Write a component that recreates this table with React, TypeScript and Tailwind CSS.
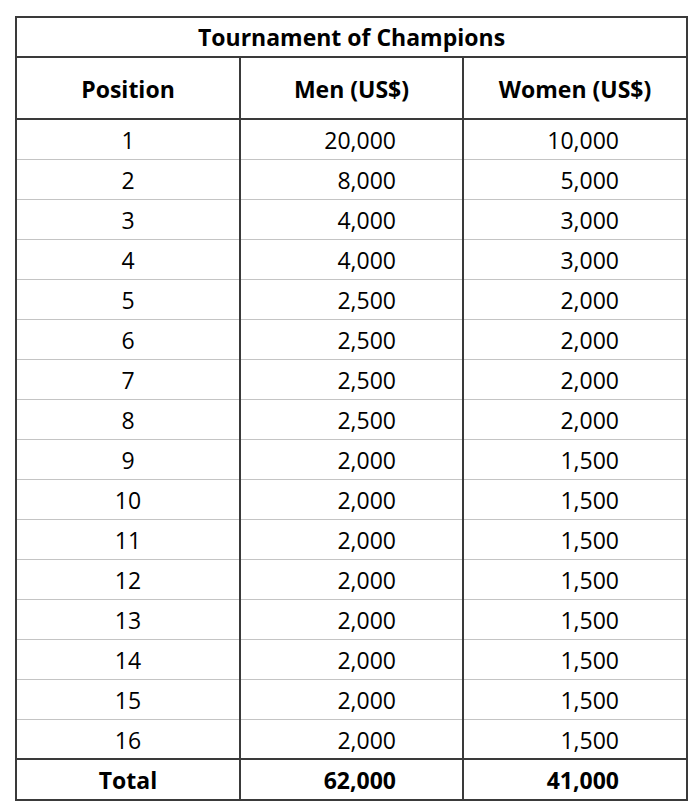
const rows: [number, string, string][] = [
  [1, '20,000', '10,000'],
  [2, '8,000', '5,000'],
  [3, '4,000', '3,000'],
  [4, '4,000', '3,000'],
  [5, '2,500', '2,000'],
  [6, '2,500', '2,000'],
  [7, '2,500', '2,000'],
  [8, '2,500', '2,000'],
  [9, '2,000', '1,500'],
  [10, '2,000', '1,500'],
  [11, '2,000', '1,500'],
  [12, '2,000', '1,500'],
  [13, '2,000', '1,500'],
  [14, '2,000', '1,500'],
  [15, '2,000', '1,500'],
  [16, '2,000', '1,500'],
];

export default function App() {
  return (
    <div className="min-h-screen w-[700px] bg-white pt-[16px] pl-[15px] text-black" style={{ fontFamily: '"Open Sans", "Liberation Sans", sans-serif' }}>
      <table className="w-[671px] table-fixed border-collapse border-2 border-[#3a3a3a] text-[23px] leading-none">
        <colgroup>
          <col className="w-[224px]" />
          <col className="w-[223px]" />
          <col className="w-[224px]" />
        </colgroup>
        <thead>
          <tr className="h-[40px]">
            <th colSpan={3} className="border-b-2 border-[#3a3a3a] text-center text-[23px] font-bold">
              Tournament of Champions
            </th>
          </tr>
          <tr className="h-[62px]">
            <th className="border-r-2 border-b-2 border-[#3a3a3a] pt-[2px] text-center text-[23px] font-bold">Position</th>
            <th className="border-r-2 border-b-2 border-[#3a3a3a] pt-[2px] text-center text-[23px] font-bold">Men (US$)</th>
            <th className="border-b-2 border-[#3a3a3a] pt-[2px] text-center text-[23px] font-bold">Women (US$)</th>
          </tr>
        </thead>
        <tbody>
          {rows.map(([pos, men, women], i) => (
            <tr key={pos} className={`h-[40px] ${i < rows.length - 1 ? 'border-b border-[#c4c4c4]' : ''}`}>
              <td className="border-r-2 border-[#3a3a3a] pt-[3px] text-center">{pos}</td>
              <td className="border-r-2 border-[#3a3a3a] pt-[3px] pr-[66px] text-right">{men}</td>
              <td className="pt-[3px] pr-[67px] text-right">{women}</td>
            </tr>
          ))}
          <tr className="h-[41px] border-t-2 border-[#3a3a3a]">
            <td className="border-r-2 border-[#3a3a3a] pt-[2px] text-center font-bold">Total</td>
            <td className="border-r-2 border-[#3a3a3a] pt-[2px] pr-[66px] text-right font-bold">62,000</td>
            <td className="pt-[2px] pr-[67px] text-right font-bold">41,000</td>
          </tr>
        </tbody>
      </table>
    </div>
  );
}
